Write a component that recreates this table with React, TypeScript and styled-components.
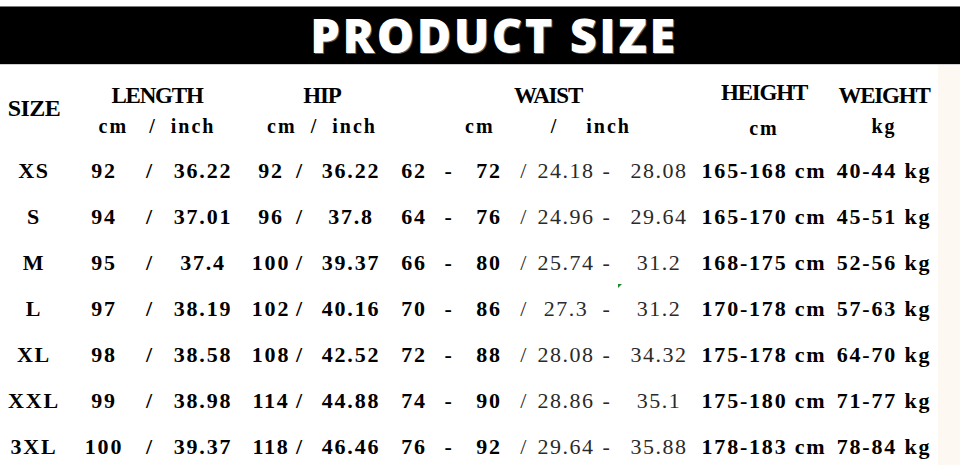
import React from "react";
import styled, { createGlobalStyle } from "styled-components";

const Global = createGlobalStyle`
  html, body { margin: 0; padding: 0; background: #fff; }
  body { width: 960px; height: 465px; overflow: hidden; }
`;

const Page = styled.div`
  width: 960px;
  height: 465px;
  overflow: hidden;
  display: flex;
  flex-direction: column;
  background: #fff;
  padding-top: 6px;
  box-sizing: border-box;
`;

const TitleBar = styled.div`
  height: 59px;
  flex: none;
  background: #000;
  border-top: 1px solid #7a7a7a;
  border-bottom: 1px solid #d0d0d0;
  box-sizing: border-box;
  display: flex;
  align-items: center;
  justify-content: center;
  padding-left: 28px;
`;

const Title = styled.h1`
  margin: 0;
  font-family: "Open Sans", "Liberation Sans", sans-serif;
  font-weight: 800;
  font-size: 47px;
  letter-spacing: 2.5px;
  color: #fff;
  line-height: 1;
  text-shadow: 1px 1px 0 #5a5a5a;
`;

const Body = styled.div`
  flex: 1;
  display: flex;
`;

const Table = styled.div`
  position: relative;
  width: 938px;
  padding-top: 15px;
  display: grid;
  grid-template-columns: 68px 72px 20px 86px 50px 8px 94px 32px 38px 42px 28px 56px 26px 78px 132px 108px;
  grid-template-rows: 32px 36px repeat(7, 46px);
  align-content: start;
  font-family: "Liberation Serif", "Times New Roman", serif;
  color: #000;
`;

const Strip = styled.div`
  flex: 1;
  background: #fdf8f1;
`;

const HeadLabel = styled.div<{ $col: string; $shift?: number }>`
  grid-column: ${(p) => p.$col};
  grid-row: 1;
  text-align: center;
  font-size: 23px;
  font-weight: 700;
  letter-spacing: -1.2px;
  line-height: 32px;
  white-space: nowrap;
  transform: translateY(${(p) => p.$shift ?? 0}px);
`;

const SizeHead = styled.div`
  grid-column: 1;
  grid-row: 1 / span 2;
  align-self: start;
  padding-top: 12px;
  text-align: center;
  font-size: 24px;
  font-weight: 700;
  line-height: 32px;
  letter-spacing: -0.5px;
`;

const Unit = styled.div<{ $col: string; $shift?: number }>`
  grid-column: ${(p) => p.$col};
  grid-row: 2;
  align-self: start;
  text-align: center;
  font-size: 20px;
  font-weight: 700;
  line-height: 28px;
  white-space: pre;
  letter-spacing: 2px;
  transform: translateY(${(p) => p.$shift ?? 0}px);
`;

const Cell = styled.div<{ $light?: boolean; $size?: number }>`
  display: flex;
  align-items: center;
  justify-content: center;
  white-space: pre;
  font-size: ${(p) => p.$size ?? 22}px;
  font-weight: ${(p) => (p.$light ? 400 : 700)};
  color: ${(p) => (p.$light ? "#2a2a2a" : "#000")};
  letter-spacing: ${(p) => (p.$light ? 1.5 : 1.8)}px;
  line-height: 46px;
`;

const Speck = styled.span`
  position: absolute;
  left: 618px;
  top: 219px;
  width: 0;
  height: 0;
  border-top: 4px solid #1a8a2a;
  border-right: 4px solid transparent;
`;

const rows = [
  ["XS", "92", "36.22", "92", "36.22", "62", "72", "24.18", "28.08", "165-168", "40-44"],
  ["S", "94", "37.01", "96", "37.8", "64", "76", "24.96", "29.64", "165-170", "45-51"],
  ["M", "95", "37.4", "100", "39.37", "66", "80", "25.74", "31.2", "168-175", "52-56"],
  ["L", "97", "38.19", "102", "40.16", "70", "86", "27.3", "31.2", "170-178", "57-63"],
  ["XL", "98", "38.58", "108", "42.52", "72", "88", "28.08", "34.32", "175-178", "64-70"],
  ["XXL", "99", "38.98", "114", "44.88", "74", "90", "28.86", "35.1", "175-180", "71-77"],
  ["3XL", "100", "39.37", "118", "46.46", "76", "92", "29.64", "35.88", "178-183", "78-84"],
];

export default function App() {
  return (
    <>
      <Global />
      <Page>
        <TitleBar>
          <Title>PRODUCT SIZE</Title>
        </TitleBar>
        <Body>
          <Table>
            <SizeHead>SIZE</SizeHead>
            <HeadLabel $col="2 / span 3">LENGTH</HeadLabel>
            <HeadLabel $col="5 / span 3">HIP</HeadLabel>
            <HeadLabel $col="8 / span 7" $shift={0}>WAIST</HeadLabel>
            <HeadLabel $col="15" $shift={-3}>HEIGHT</HeadLabel>
            <HeadLabel $col="16">WEIGHT</HeadLabel>
            <Unit $col="2 / span 3">{"cm   /  inch"}</Unit>
            <Unit $col="5 / span 3">{"cm  /  inch"}</Unit>
            <Unit $col="8 / span 7">{"cm        /    inch"}</Unit>
            <Unit $col="15" $shift={2}>cm</Unit>
            <Unit $col="16">kg</Unit>
            {rows.map((r) => (
              <React.Fragment key={r[0]}>
                <Cell $size={22}>{r[0]}</Cell>
                <Cell>{r[1]}</Cell>
                <Cell>/</Cell>
                <Cell>{r[2]}</Cell>
                <Cell>{r[3]}</Cell>
                <Cell>/</Cell>
                <Cell>{r[4]}</Cell>
                <Cell>{r[5]}</Cell>
                <Cell>-</Cell>
                <Cell>{r[6]}</Cell>
                <Cell $light>/</Cell>
                <Cell $light>{r[7]}</Cell>
                <Cell $light>-</Cell>
                <Cell $light>{r[8]}</Cell>
                <Cell>{`${r[9]} cm`}</Cell>
                <Cell>{`${r[10]} kg`}</Cell>
              </React.Fragment>
            ))}
            <Speck />
          </Table>
          <Strip />
        </Body>
      </Page>
    </>
  );
}
